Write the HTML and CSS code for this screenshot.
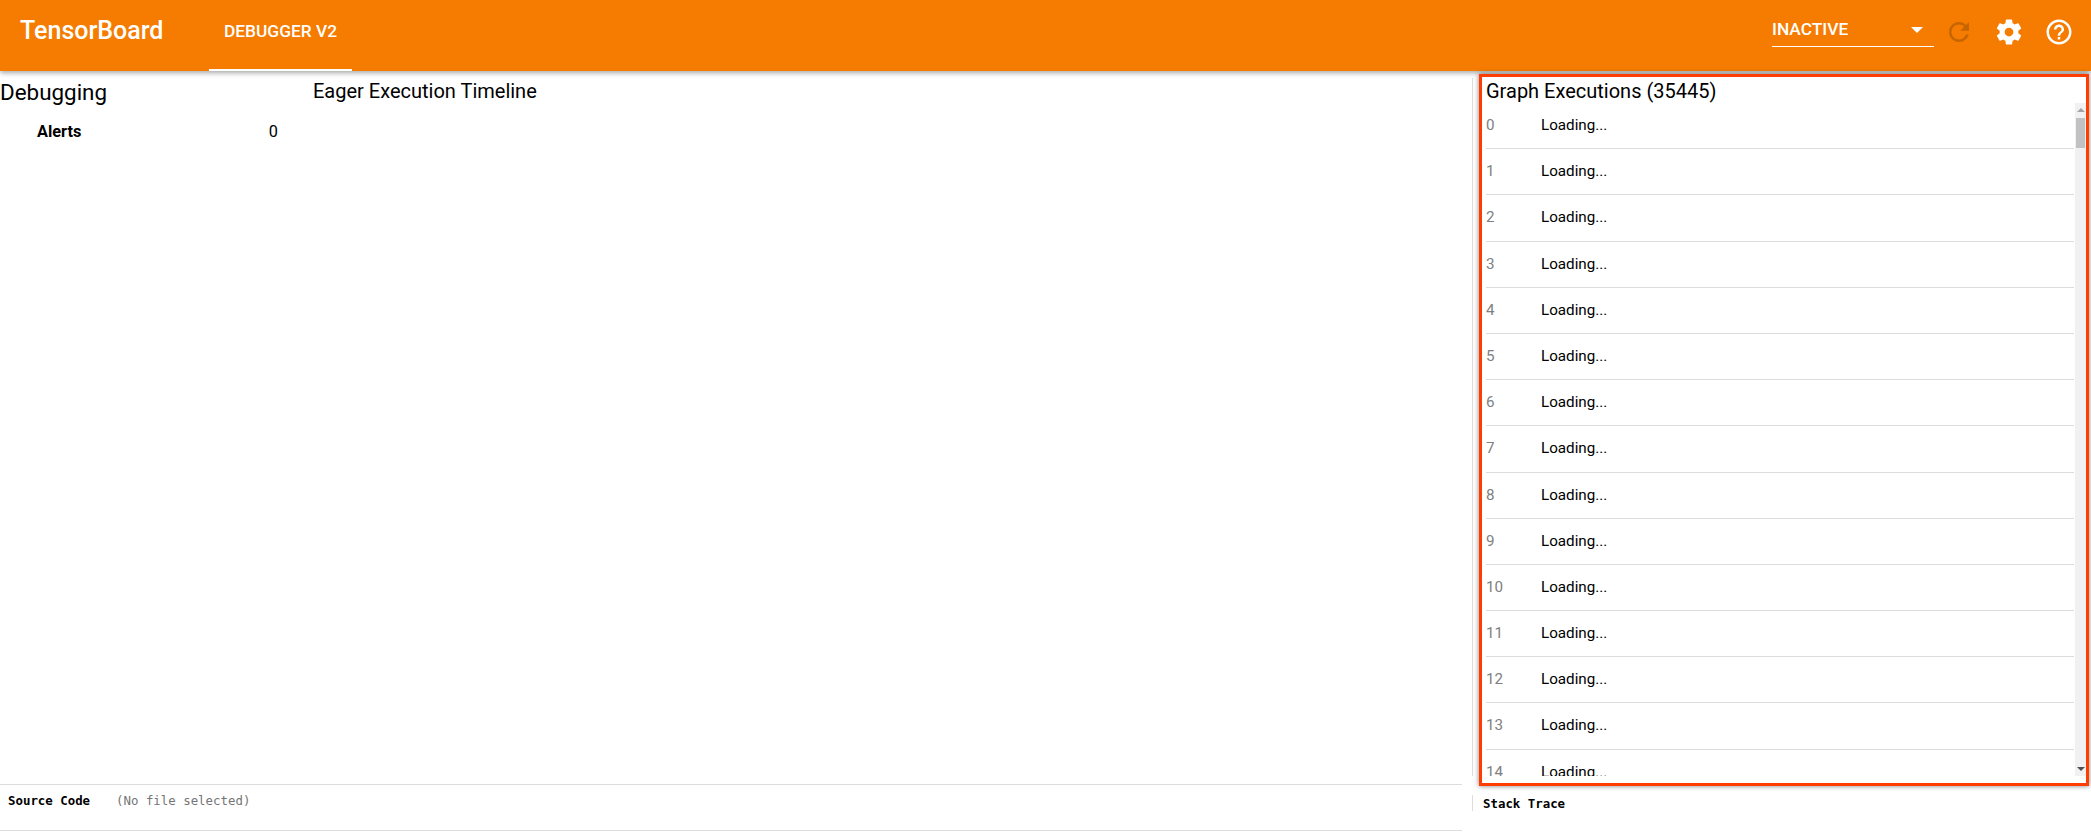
FILE: index.html
```html
<!DOCTYPE html>
<html lang="en">
<head>
    <meta charset="UTF-8">
    <meta name="viewport" content="width=device-width, initial-scale=1.0">
    <title>TensorBoard</title>
    <link rel="stylesheet" href="styles.css">
</head>
<body>
    <header class="toolbar">
        <div class="brand">TensorBoard</div>
        <div class="tab">DEBUGGER V2</div>
        <div class="toolbar-right">
            <div class="run-select">
                <span>INACTIVE</span>
                <i class="select-arrow"></i>
            </div>
            <svg class="icon icon-disabled" viewBox="0 0 24 24"><path d="M17.65 6.35C16.2 4.9 14.21 4 12 4c-4.42 0-7.99 3.58-7.99 8s3.57 8 7.99 8c3.73 0 6.84-2.55 7.73-6h-2.08c-.82 2.33-3.04 4-5.65 4-3.31 0-6-2.69-6-6s2.69-6 6-6c1.66 0 3.14.69 4.22 1.78L13 11h7V4l-2.35 2.35z"/></svg>
            <svg class="icon" viewBox="0 0 24 24"><path d="M19.43 12.98c.04-.32.07-.64.07-.98s-.03-.66-.07-.98l2.11-1.65c.19-.15.24-.42.12-.64l-2-3.46c-.12-.22-.39-.3-.61-.22l-2.49 1c-.52-.4-1.08-.73-1.69-.98l-.38-2.65C14.46 2.18 14.25 2 14 2h-4c-.25 0-.46.18-.49.42l-.38 2.65c-.61.25-1.17.59-1.69.98l-2.49-1c-.23-.09-.49 0-.61.22l-2 3.46c-.13.22-.07.49.12.64l2.11 1.65c-.04.32-.07.65-.07.98s.03.66.07.98l-2.11 1.65c-.19.15-.24.42-.12.64l2 3.46c.12.22.39.3.61.22l2.49-1c.52.4 1.08.73 1.69.98l.38 2.65c.03.24.24.42.49.42h4c.25 0 .46-.18.49-.42l.38-2.65c.61-.25 1.17-.59 1.69-.98l2.49 1c.23.09.49 0 .61-.22l2-3.46c.12-.22.07-.49-.12-.64l-2.11-1.65zM12 15.5c-1.93 0-3.5-1.57-3.5-3.5s1.57-3.5 3.5-3.5 3.5 1.57 3.5 3.5-1.57 3.5-3.5 3.5z"/></svg>
            <svg class="icon" viewBox="0 0 24 24"><path d="M11 18h2v-2h-2v2zm1-16C6.48 2 2 6.48 2 12s4.48 10 10 10 10-4.48 10-10S17.52 2 12 2zm0 18c-4.41 0-8-3.59-8-8s3.59-8 8-8 8 3.59 8 8-3.59 8-8 8zm0-14c-2.21 0-4 1.79-4 4h2c0-1.1.9-2 2-2s2 .9 2 2c0 2-3 1.75-3 5h2c0-2.25 3-2.5 3-5 0-2.21-1.79-4-4-4z"/></svg>
        </div>
    </header>

    <main class="top-row">
        <section class="alerts">
            <h2 class="alerts-title">Debugging</h2>
            <div class="alert-row">
                <span class="alert-label">Alerts</span>
                <span class="alert-count">0</span>
            </div>
        </section>
        <section class="timeline">
            <h2 class="timeline-title">Eager Execution Timeline</h2>
        </section>
        <div class="divider"></div>
        <section class="graph-panel">
            <h2 class="graph-title">Graph Executions (35445)</h2>
            <div class="graph-body">
                <ul class="exec-list">
                    <li class="exec-row"><span class="exec-index">0</span><span>Loading...</span></li>
                    <li class="exec-row"><span class="exec-index">1</span><span>Loading...</span></li>
                    <li class="exec-row"><span class="exec-index">2</span><span>Loading...</span></li>
                    <li class="exec-row"><span class="exec-index">3</span><span>Loading...</span></li>
                    <li class="exec-row"><span class="exec-index">4</span><span>Loading...</span></li>
                    <li class="exec-row"><span class="exec-index">5</span><span>Loading...</span></li>
                    <li class="exec-row"><span class="exec-index">6</span><span>Loading...</span></li>
                    <li class="exec-row"><span class="exec-index">7</span><span>Loading...</span></li>
                    <li class="exec-row"><span class="exec-index">8</span><span>Loading...</span></li>
                    <li class="exec-row"><span class="exec-index">9</span><span>Loading...</span></li>
                    <li class="exec-row"><span class="exec-index">10</span><span>Loading...</span></li>
                    <li class="exec-row"><span class="exec-index">11</span><span>Loading...</span></li>
                    <li class="exec-row"><span class="exec-index">12</span><span>Loading...</span></li>
                    <li class="exec-row"><span class="exec-index">13</span><span>Loading...</span></li>
                    <li class="exec-row"><span class="exec-index">14</span><span>Loading...</span></li>
                </ul>
                <div class="scrollbar">
                    <i class="arrow-up"></i>
                    <div class="thumb"></div>
                    <i class="arrow-down"></i>
                </div>
            </div>
        </section>
    </main>

    <footer class="bottom-row">
        <div class="source-code">
            <span class="mono-label">Source Code</span>
            <span class="file-name">(No file selected)</span>
        </div>
        <div class="stack-trace">
            <span class="mono-label">Stack Trace</span>
        </div>
    </footer>
</body>
</html>
```

FILE: styles.css
```css
* {
    box-sizing: border-box;
}
html, body {
    height: 100%;
}
body {
    margin: 0;
    font-family: Roboto, Arial, sans-serif;
    color: #000;
    background-color: #fff;
    overflow: hidden;
}
h2 {
    margin: 0;
    font-weight: 400;
}
.toolbar {
    display: flex;
    align-items: stretch;
    height: 71px;
    background-color: #f57c00;
    color: #fff;
    box-shadow: 0 2px 5px rgba(0, 0, 0, 0.35);
    position: relative;
}
.brand {
    width: 209px;
    padding: 16px 0 0 20px;
    font-size: 25px;
    font-weight: 500;
}
.tab {
    width: 143px;
    padding-top: 21px;
    text-align: center;
    font-size: 17.33px;
    font-weight: 500;
    border-bottom: 2px solid #fff;
}
.toolbar-right {
    display: flex;
    align-items: flex-start;
    margin-left: auto;
    padding-right: 17px;
}
.run-select {
    display: flex;
    justify-content: space-between;
    width: 162px;
    height: 47px;
    padding: 19px 11px 0 0;
    font-size: 17.33px;
    font-weight: 500;
    border-bottom: 1px solid #fff;
}
.select-arrow {
    width: 0;
    height: 0;
    margin-top: 8px;
    border-left: 6px solid transparent;
    border-right: 6px solid transparent;
    border-top: 6px solid #fff;
}
.icon {
    width: 30px;
    height: 30px;
    margin-top: 17px;
    margin-left: 20px;
    fill: #fff;
}
.icon-disabled {
    fill: #c66400;
    margin-left: 10px;
}
.top-row {
    display: flex;
    height: 713px;
}
.alerts {
    width: 313px;
    padding-top: 7px;
}
.alerts-title {
    font-size: 22.4px;
    line-height: 28px;
}
.alert-row {
    display: flex;
    justify-content: space-between;
    width: 278px;
    margin-top: 16px;
    padding-left: 37px;
    font-size: 16.3px;
}
.alert-label {
    font-weight: 700;
}
.timeline {
    flex: 1;
    padding-top: 6px;
}
.timeline-title {
    font-size: 20px;
    line-height: 28px;
}
.divider {
    width: 1px;
    height: 698px;
    margin: 7px 6px 0 0;
    background-color: #ddd;
}
.graph-panel {
    display: flex;
    flex-direction: column;
    flex-shrink: 0;
    position: relative;
    width: 610px;
    height: 712px;
    margin: 3px 2px 0 0;
    padding: 0 0 7px 4px;
    background-color: #fff;
    border: 3px solid #ff3d00;
    box-shadow: 0 0 5px rgba(0, 0, 0, 0.5);
    overflow: hidden;
}
.graph-title {
    font-size: 20px;
    line-height: 24px;
    margin-top: 2px;
}
.graph-body {
    display: flex;
    flex: 1;
    min-height: 0;
}
.exec-list {
    flex: 1;
    margin: 0;
    padding: 0;
    list-style: none;
    overflow: hidden;
}
.exec-row {
    display: flex;
    height: 46.2px;
    padding-top: 11px;
    font-size: 15.2px;
    line-height: 22px;
    border-bottom: 1px solid #ddd;
}
.exec-index {
    width: 55px;
    color: #808080;
}
.scrollbar {
    display: flex;
    flex-direction: column;
    align-items: center;
    width: 11px;
    margin-left: 1px;
    background-color: #f1f1f1;
}
.arrow-up {
    width: 0;
    height: 0;
    margin-top: 5px;
    border-left: 4px solid transparent;
    border-right: 4px solid transparent;
    border-bottom: 4px solid #a3a3a3;
}
.thumb {
    width: 9px;
    height: 30px;
    margin-top: 6px;
    background-color: #c1c1c1;
}
.arrow-down {
    width: 0;
    height: 0;
    margin-top: auto;
    margin-bottom: 5px;
    border-left: 4px solid transparent;
    border-right: 4px solid transparent;
    border-top: 4px solid #505050;
}
.bottom-row {
    display: flex;
    font-family: "DejaVu Sans Mono", "Liberation Mono", monospace;
    font-size: 12.4px;
}
.source-code {
    display: flex;
    gap: 26px;
    width: 1462px;
    height: 47px;
    padding: 8px 0 0 8px;
    border-top: 1px solid #ddd;
    border-bottom: 1px solid #ddd;
}
.file-name {
    color: #757575;
}
.stack-trace {
    flex: 1;
    height: 16px;
    margin: 11px 0 0 10px;
    padding: 1px 0 0 10px;
    border-left: 1px solid #ddd;
}
.mono-label {
    font-weight: 700;
}
```
